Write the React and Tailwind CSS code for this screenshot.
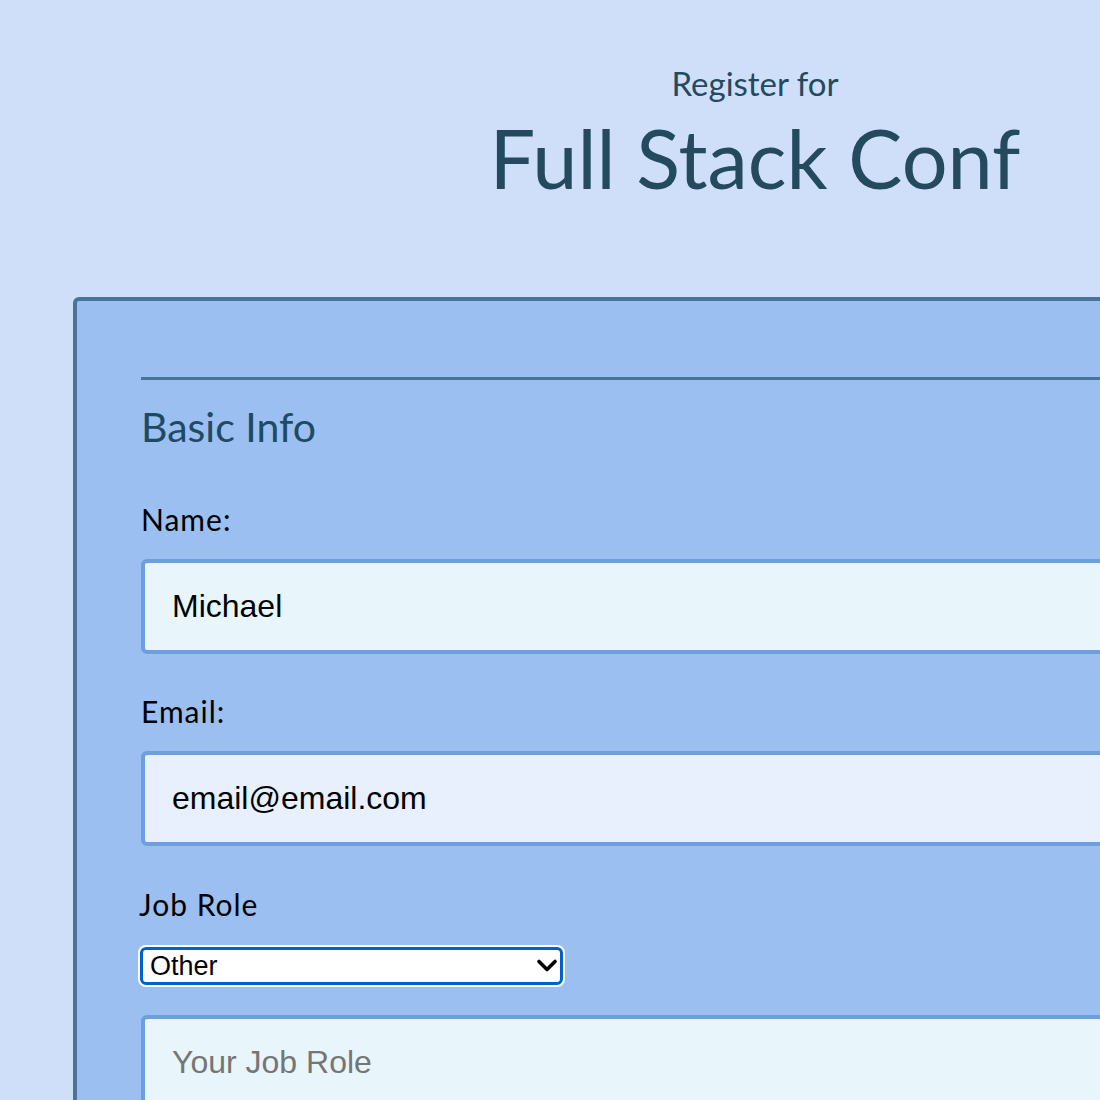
import { useState } from "react";

const headingFont = { fontFamily: "Lato, 'Noto Sans', sans-serif" };

function Field({ label, children }) {
  return (
    <div>
      <label className="block mt-[42px] text-[30px] leading-none tracking-[1px] text-black" style={headingFont}>
        {label}
      </label>
      {children}
    </div>
  );
}

export default function App() {
  const [name, setName] = useState("Michael");
  const [email, setEmail] = useState("email@email.com");
  const [role, setRole] = useState("other");
  const [customRole, setCustomRole] = useState("");

  const inputClass =
    "mt-[25px] block w-full h-[95px] rounded-md border-4 border-[#6d9ee0] px-[27px] text-[32px] text-black outline-none placeholder:text-[#757575] font-['Liberation_Sans',Arial,sans-serif]";

  return (
    <div className="w-[1100px] h-[1100px] overflow-hidden bg-[#cfdffa]">
      <div className="ml-[73px] w-[1364px]">
        <header className="text-center text-[#234a5e]" style={headingFont}>
          <p className="pt-[67px] text-[33px] leading-none">Register for</p>
          <h1 className="mt-[17px] text-[81px] leading-none">Full Stack Conf</h1>
        </header>

        <form className="mt-[99px] rounded-md border-4 border-[#4a7399] bg-[#9bbff0] px-[64px] pt-[76px] pb-10">
          <div className="h-[3px] bg-[#4a7399]" />
          <h2 className="mt-[26px] text-[41px] leading-none text-[#1f4a63]" style={headingFont}>
            Basic Info
          </h2>

          <label className="block mt-[57px] text-[30px] leading-none tracking-[1px] text-black" style={headingFont}>
            Name:
          </label>
          <input
            className={inputClass + " bg-[#e8f6fc]"}
            onChange={(e) => setName(e.target.value)}
            type="text"
            value={name}
          />

          <Field label="Email:">
            <input
              className={inputClass + " bg-[#e8effd]"}
              onChange={(e) => setEmail(e.target.value)}
              type="email"
              value={email}
            />
          </Field>

          <label className="block mt-[43px] -ml-[2px] text-[30px] leading-none tracking-[1px] text-black" style={headingFont}>
            Job Role
          </label>
          <div className="relative mt-[28px] w-[423px] -ml-px">
            <select
              className="block w-full h-[38px] appearance-none rounded-md border-[3px] border-[#0060cf] bg-white pl-[7px] text-[27px] leading-none text-black outline-none shadow-[0_0_0_2px_#ffffff] font-['Liberation_Sans',Arial,sans-serif]"
              onChange={(e) => setRole(e.target.value)}
              value={role}
            >
              <option value="full-stack">Full Stack Developer</option>
              <option value="front-end">Front End Developer</option>
              <option value="back-end">Back End Developer</option>
              <option value="designer">Designer</option>
              <option value="other">Other</option>
            </select>
            <svg
              className="pointer-events-none absolute right-[5px] top-[11px] h-[15px] w-[22px]"
              viewBox="0 0 22 15"
              fill="none"
              stroke="#000"
              strokeWidth="3.6"
              strokeLinecap="round"
              strokeLinejoin="round"
            >
              <path d="M3 3.5l8 8 8-8" />
            </svg>
          </div>

          <input
            className={inputClass + " mt-[30px] bg-[#e8f6fc]"}
            onChange={(e) => setCustomRole(e.target.value)}
            placeholder="Your Job Role"
            type="text"
            value={customRole}
          />
        </form>
      </div>
    </div>
  );
}
